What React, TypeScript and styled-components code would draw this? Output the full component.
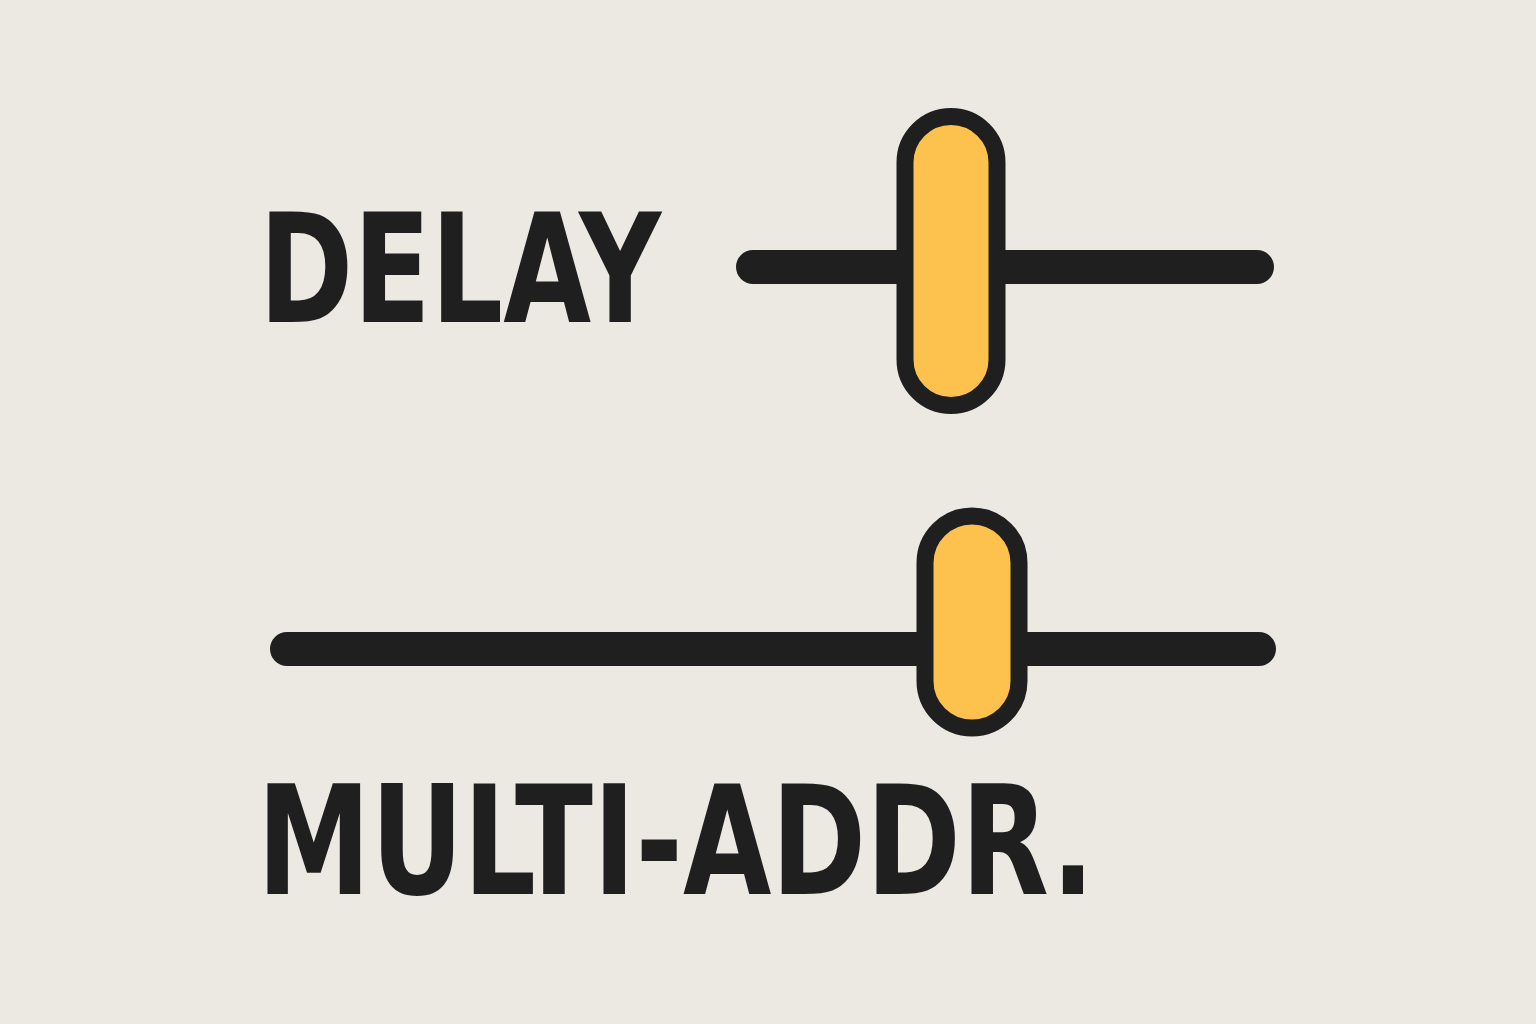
import * as React from 'react';
import styled, { createGlobalStyle } from 'styled-components';

const Colors = {
  paper: '#ece9e3',
  ink: '#1f1f1f',
  amber: '#fdc24e',
};

type SliderProps = {
  value: number;
  thumbWidth: number;
  thumbHeight: number;
  thumbLift?: number;
};

const Slider = ({ value, thumbWidth, thumbHeight, thumbLift = 0 }: SliderProps) => (
  <Track>
    <Thumb
      $w={thumbWidth}
      $h={thumbHeight}
      style={{ left: `${value}%`, marginTop: -thumbLift }}
    />
  </Track>
);

const App = () => {
  return (
    <>
      <GlobalStyle />
      <Page>
        <Panel>
          <DelayRow>
            <Label>DELAY</Label>
            <SliderSlot>
              <Slider value={40} thumbWidth={109} thumbHeight={306} thumbLift={6} />
            </SliderSlot>
          </DelayRow>
          <WideRow>
            <Slider value={69.8} thumbWidth={111} thumbHeight={229} thumbLift={27} />
          </WideRow>
          <BottomLabel>MULTI-ADDR.</BottomLabel>
        </Panel>
      </Page>
    </>
  );
};

const GlobalStyle = createGlobalStyle`
  html, body {
    margin: 0;
    padding: 0;
    background: ${Colors.paper};
  }
`;

const Page = styled.div`
  width: 1536px;
  height: 1024px;
  background: ${Colors.paper};
  overflow: hidden;
`;

const Panel = styled.div`
  display: flex;
  flex-direction: column;
  width: 1006px;
  margin-left: 270px;
`;

const DelayRow = styled.div`
  display: grid;
  grid-template-columns: 466px 538px;
  align-items: center;
  height: 152px;
  margin-top: 194px;
`;

// the label's caps sit a touch above its line box centre
const SliderSlot = styled.div`
  padding-bottom: 6px;
`;

const WideRow = styled.div`
  margin-top: 286px;
`;

const Label = styled.div`
  font-family: 'DejaVu Sans Condensed', 'Liberation Sans', sans-serif;
  font-weight: 700;
  font-size: 152px;
  line-height: 1;
  color: ${Colors.ink};
  white-space: nowrap;
  transform: translateX(-11px) scaleX(0.83);
  transform-origin: left center;
`;

const BottomLabel = styled(Label)`
  margin-top: 100px;
  transform: translateX(-13px) scaleX(0.835);
`;

const Track = styled.div`
  position: relative;
  height: 34px;
  border-radius: 17px;
  background: ${Colors.ink};
`;

const Thumb = styled.div<{ $w: number; $h: number }>`
  position: absolute;
  top: 50%;
  width: ${(p) => p.$w}px;
  height: ${(p) => p.$h}px;
  box-sizing: border-box;
  transform: translate(-50%, -50%);
  border: 17px solid ${Colors.ink};
  border-radius: ${(p) => p.$w / 2}px;
  background: ${Colors.amber};
`;

export default App;
